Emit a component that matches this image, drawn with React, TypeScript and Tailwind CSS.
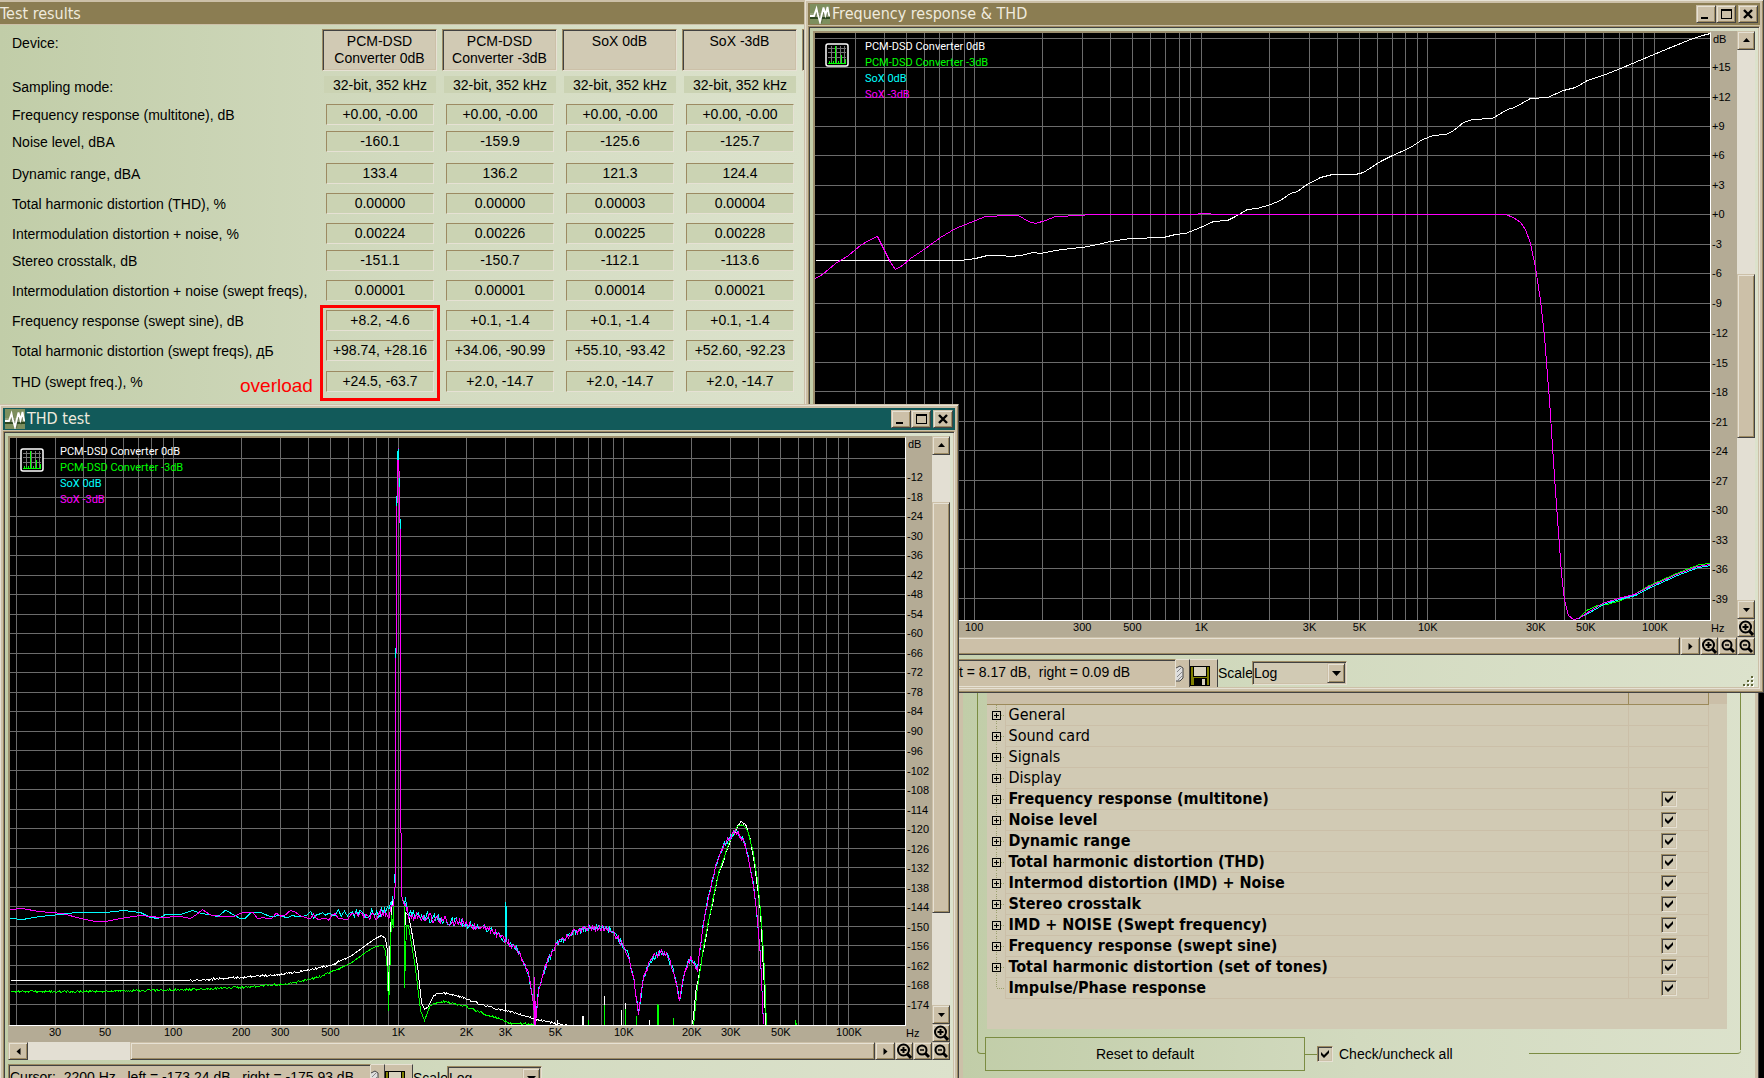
import { useId, useState } from "react";
import type { ReactNode } from "react";

const RAISED =
  "border border-t-[#ccc0a8] border-l-[#ccc0a8] border-r-[#424242] border-b-[#424242] bg-[#ccc0a8] shadow-[inset_1px_1px_0_#e6e1d4,inset_-1px_-1px_0_#9c8a62]";
const SUNKEN =
  "border border-t-[#9c8a62] border-l-[#9c8a62] border-r-[#e6e1d4] border-b-[#e6e1d4] shadow-[inset_1px_1px_0_#424242,inset_-1px_-1px_0_#ccc0a8]";
const FACE_GRADIENT = "bg-linear-to-r from-[#c1cda8] via-[#d2dabf] to-[#dce2cc]";
const UI_FONT = "font-['DejaVu_Sans_Condensed','Noto_Sans',sans-serif]";

type Point = [number, number];

interface Trace {
  color: string;
  points: Point[];
}

interface ChartSpec {
  // plot area origin and size, in the units of the trace points
  x0: number;
  y0: number;
  decadeX: number;
  decade: number;
  minFreq: number;
  gridTop: number;
  gridStep: number;
  gridCount: number;
  yLabels: string[];
  yUnitAt: number;
  xLabels: [number, string][];
  traces: Trace[];
}

const W = 895;
const H = 587;

function hash(n: number) {
  const s = Math.sin(n * 127.1) * 43758.5453;
  return s - Math.floor(s);
}

function noisy(points: Point[], amp: (x: number) => number, seed: number, stepAt: (x: number) => number = () => 1): Point[] {
  const out: Point[] = [];
  for (let i = 0; i < points.length - 1; i++) {
    const [ax, ay] = points[i];
    const [bx, by] = points[i + 1];
    const steps = Math.max(1, Math.round((bx - ax) / stepAt(ax)));
    for (let s = 0; s < steps; s++) {
      const x = ax + ((bx - ax) * s) / steps;
      const y = ay + ((by - ay) * s) / steps;
      out.push([x, y + (hash(x + seed) - 0.5) * 2 * amp(x)]);
    }
  }
  out.push(points[points.length - 1]);
  return out;
}

/* ---------- frequency response data ---------- */

const FR_OVERLOAD: Point[] = [
  [815, 260], [960, 260], [975, 258], [987, 255], [1000, 255], [1010, 256], [1020, 255], [1033, 252],
  [1040, 253], [1055, 250], [1070, 248], [1082, 247], [1097, 244], [1110, 241], [1130, 238], [1163, 237],
  [1175, 234], [1185, 233], [1200, 227], [1213, 221], [1227, 220], [1235, 216], [1247, 209], [1257, 208],
  [1270, 204], [1280, 200], [1290, 193], [1297, 191], [1305, 185], [1320, 177], [1332, 174], [1355, 174],
  [1363, 172], [1380, 161], [1390, 156], [1410, 147], [1422, 139], [1433, 135], [1445, 134], [1452, 131],
  [1463, 122], [1472, 119], [1492, 118], [1507, 109], [1514, 107], [1530, 98], [1547, 97], [1563, 90],
  [1575, 87], [1587, 80], [1605, 74], [1620, 68], [1663, 50], [1690, 39], [1702, 35], [1710, 33],
];

const FR_COMMON: Point[] = [
  [815, 278], [822, 274], [835, 263], [848, 255], [860, 245], [870, 239], [877, 236], [885, 252], [890, 262],
  [895, 269], [902, 265], [910, 258], [925, 248], [940, 237], [955, 228], [975, 220], [985, 216], [1008, 215],
  [1018, 215], [1028, 221], [1035, 223], [1045, 220], [1055, 216], [1080, 215], [1090, 214], [1190, 214],
  [1205, 213], [1215, 214], [1505, 214], [1513, 217], [1520, 222], [1525, 229], [1530, 243], [1535, 267],
  [1540, 300], [1544, 336], [1547, 375], [1549, 400], [1553, 461], [1556, 505], [1559, 545], [1561, 573],
  [1564, 600], [1568, 615], [1573, 619], [1578, 618],
];

const FR_TAIL: Point[] = [
  [1592, 609], [1602, 603], [1618, 598], [1634, 594], [1647, 587], [1676, 574], [1697, 566], [1710, 564],
];

const FR_TAIL_GREEN: Point[] = [
  [1586, 610], [1597, 605], [1607, 604], [1620, 600], [1634, 594], [1647, 586], [1676, 573], [1699, 564], [1710, 563],
];

/* ---------- THD data ---------- */

const THD_LOBES: Point[] = [
  [480, 927], [492, 930], [505, 940], [517, 950], [528, 973], [533, 1003], [535, 1024], [538, 990], [547, 960],
  [557, 943], [573, 932], [590, 927], [607, 928], [617, 937], [627, 953], [633, 977], [638, 1014], [643, 977],
  [650, 960], [660, 951], [667, 956], [673, 970], [679, 999], [685, 968], [690, 959], [697, 968], [703, 923],
  [710, 887], [717, 860], [725, 842], [735, 831], [742, 838], [747, 853], [752, 877], [756, 910], [760, 957],
  [763, 1024],
];

const THD_SPIKE: Point[] = [
  [393, 905], [395, 880], [395, 655], [396, 650], [396, 505], [397, 500], [397, 460], [398, 448], [398, 460],
  [399, 480], [399, 520], [400, 525], [400, 830], [401, 835], [401, 895], [404, 905],
];

const noiseAmp = (x: number) => {
  if (x < 195) return 0;
  if (x < 310) return 3;
  if (x < 475) return 5;
  return 3;
};

const noiseStep = (x: number) => {
  if (x < 240) return 8;
  if (x < 310) return 5;
  if (x < 350) return 3;
  return x < 375 ? 2 : 1;
};

const THD_SOX0: Point[] = [
  ...noisy(
    [[10, 918], [22, 919], [40, 916], [60, 914], [75, 912], [105, 912], [123, 910], [140, 912], [150, 917],
      [158, 918], [165, 914], [180, 914], [192, 910], [210, 915], [225, 912], [240, 916], [260, 911], [275, 916],
      [292, 917], [310, 913], [350, 914], [375, 912], [389, 910], [392, 896]],
    noiseAmp,
    3,
    noiseStep,
  ),
  ...THD_SPIKE,
  ...noisy([[405, 900], [408, 912], [430, 917], [450, 920], [465, 924], ...THD_LOBES], noiseAmp, 3),
];

const THD_SOX3: Point[] = [
  ...noisy(
    [[10, 909], [22, 908], [38, 911], [62, 913], [80, 918], [95, 921], [105, 921], [120, 918], [140, 915],
      [160, 917], [180, 916], [190, 918], [202, 912], [220, 915], [248, 912], [262, 917], [285, 912], [310, 915],
      [350, 915], [375, 914], [389, 914], [392, 905]],
    noiseAmp,
    57,
    noiseStep,
  ),
  ...THD_SPIKE,
  ...noisy([[405, 905], [408, 915], [430, 918], [450, 921], [465, 925], ...THD_LOBES], noiseAmp, 57),
];

const THD_WHITE: Point[] = [
  ...noisy(
    [[10, 980], [190, 980], [240, 977], [280, 974], [300, 971], [330, 965], [350, 956], [365, 945], [375, 938],
      [381, 935], [385, 938]],
    (x) => (x < 190 || x > 345 ? 0 : 1),
    9,
  ),
  [387, 950], [388, 992], [390, 930], [392, 898], ...THD_SPIKE, [404, 938], [405, 912], [408, 915],
  ...noisy(
    [[411, 930], [417, 965], [421, 1002], [424, 1009], [428, 1006], [433, 995], [440, 992], [460, 996], [480, 1004],
      [500, 1009], [520, 1014], [535, 1019], [555, 1023], [570, 1026]],
    (x) => (x < 433 ? 0 : 1),
    11,
  ),
];

const THD_GREEN: Point[] = [
  ...noisy(
    [[10, 991], [100, 991], [190, 989], [240, 987], [290, 983], [320, 976], [350, 963], [365, 952], [375, 946],
      [382, 945], [385, 950]],
    (x) => (x > 340 ? 0 : 1),
    5,
  ),
  [387, 970], [388, 1010], [390, 950], [391, 915], [393, 927], ...THD_SPIKE, [404, 987], [406, 925],
  ...noisy(
    [[408, 925], [415, 968], [420, 1010], [424, 1020], [430, 1004], [445, 1001], [465, 1006], [480, 1012],
      [500, 1019], [510, 1023], [535, 1024], [540, 1027]],
    (x) => (x < 430 ? 0 : 1),
    21,
  ),
];

const ULTRA_WHITE = noisy(
  [[692, 1025], [696, 987], [703, 949], [710, 912], [718, 874], [727, 848], [733, 833], [740, 822], [745, 824],
    [750, 840], [755, 870], [760, 912], [764, 990], [765, 1025]],
  () => 2,
  31,
);

const ULTRA_GREEN = noisy(
  [[693, 1025], [697, 987], [703, 947], [710, 910], [718, 873], [727, 847], [733, 832], [738, 825], [744, 825],
    [748, 833], [753, 853], [757, 880], [761, 920], [764, 970], [766, 1025]],
  () => 1,
  43,
);

function tick(color: string, x: number, top: number, bottom = 1025): Trace {
  return { color, points: [[x, top], [x, bottom]] };
}

const WHITE = "#ffffff";
const GREEN = "#00ff00";
const CYAN = "#00ffff";
const MAGENTA = "#ff00ff";

const FREQ_CHART: ChartSpec = {
  x0: 815,
  y0: 33,
  decadeX: 1201,
  decade: 226.6,
  minFreq: 30,
  gridTop: 37.6,
  gridStep: 29.47,
  gridCount: 20,
  yLabels: ["", "+15", "+12", "+9", "+6", "+3", "+0", "-3", "-6", "-9", "-12", "-15", "-18", "-21", "-24", "-27", "-30", "-33", "-36", "-39"],
  yUnitAt: 39,
  xLabels: [[100, "100"], [300, "300"], [500, "500"], [1000, "1K"], [3000, "3K"], [5000, "5K"], [10000, "10K"], [30000, "30K"], [50000, "50K"], [100000, "100K"]],
  traces: [
    { color: WHITE, points: FR_OVERLOAD },
    { color: GREEN, points: [...FR_COMMON, ...FR_TAIL_GREEN] },
    { color: CYAN, points: [[1578, 618], ...FR_TAIL.map(([x, y]): Point => [x + 1, y + 1])] },
    { color: MAGENTA, points: [...FR_COMMON, ...FR_TAIL] },
  ],
};

const THD_CHART: ChartSpec = {
  x0: 10,
  y0: 438,
  decadeX: 398.5,
  decade: 225,
  minFreq: 20,
  gridTop: 457.9,
  gridStep: 19.5,
  gridCount: 29,
  yLabels: ["", ...Array.from({ length: 28 }, (_, i) => String(-12 - i * 6))],
  yUnitAt: 444,
  xLabels: [[30, "30"], [50, "50"], [100, "100"], [200, "200"], [300, "300"], [500, "500"], [1000, "1K"], [2000, "2K"], [3000, "3K"], [5000, "5K"], [10000, "10K"], [20000, "20K"], [30000, "30K"], [50000, "50K"], [100000, "100K"]],
  traces: [
    { color: WHITE, points: THD_WHITE },
    { color: WHITE, points: ULTRA_WHITE },
    tick(WHITE, 505, 1002, 1011),
    tick(WHITE, 557, 1019),
    tick(WHITE, 582, 1015),
    tick(WHITE, 583, 1015),
    tick(WHITE, 604, 995),
    tick(WHITE, 621, 1009),
    tick(WHITE, 625, 1002),
    tick(WHITE, 649, 1019),
    { color: GREEN, points: THD_GREEN },
    { color: GREEN, points: ULTRA_GREEN },
    tick(GREEN, 604, 1004),
    tick(GREEN, 588, 1019),
    tick(GREEN, 625, 1008),
    tick(GREEN, 636, 1015),
    tick(GREEN, 657, 1003),
    tick(GREEN, 658, 1004),
    tick(GREEN, 673, 1017),
    tick(GREEN, 795, 1019),
    tick(GREEN, 796, 1022),
    { color: CYAN, points: THD_SOX0 },
    tick(CYAN, 505, 901, 940),
    tick(CYAN, 506, 905, 940),
    { color: MAGENTA, points: THD_SOX3 },
    tick(MAGENTA, 534, 976),
    tick(MAGENTA, 535, 1000),
    tick(CYAN, 398, 448, 459),
    tick(CYAN, 397, 450, 459),
    tick(CYAN, 396, 495, 505),
    tick(CYAN, 399, 477, 486),
    tick(CYAN, 400, 518, 528),
    tick(CYAN, 395, 647, 657),
    tick(CYAN, 394, 873, 882),
  ],
};

const LEGEND = [
  { name: "PCM-DSD Converter 0dB", className: "text-white" },
  { name: "PCM-DSD Converter -3dB", className: "text-[#00ff00]" },
  { name: "SoX 0dB", className: "text-[#00ffff]" },
  { name: "SoX -3dB", className: "text-[#ff00ff]" },
];

function freqToX(spec: ChartSpec, freq: number) {
  return Math.round(spec.decadeX + spec.decade * Math.log10(freq / 1000) - 0.5) - spec.x0;
}

function gridFreqs(spec: ChartSpec) {
  const out: number[] = [];
  for (const base of [10, 100, 1000, 10000, 100000]) {
    for (let n = 1; n < 10; n++) {
      const f = base * n;
      if (f >= spec.minFreq && f <= 100000) out.push(f);
    }
  }
  return out;
}

function gridY(spec: ChartSpec, i: number) {
  return Math.round(spec.gridTop + spec.gridStep * i) - spec.y0;
}

/* ---------- icons ---------- */

function AppIcon() {
  return (
    <svg className="size-5 shrink-0" viewBox="0 0 20 20" aria-hidden="true">
      <rect width="20" height="20" fill="#7d8f5e" />
      <rect y="9" width="20" height="4" fill="#93a078" />
      <rect y="13" width="20" height="2" fill="#2f4a1f" />
      <path d="M1 13h4l2.500-6 2 6 1.500 6 3-13 2 7 2-8 2 8" fill="none" stroke="#35432a" strokeWidth="2" opacity=".4" />
      <path d="M0 12h4L6.500 4.500 8 11l2 7 3.500-14.500L15.500 11l2-8L19 11l1 1" fill="none" stroke="#fff" strokeWidth="1.800" />
    </svg>
  );
}

function SpectrumIcon() {
  return (
    <svg className="size-6" viewBox="0 0 24 24" shapeRendering="crispEdges" aria-hidden="true">
      <rect x="1" y="1" width="22" height="22" rx="2" fill="#000" stroke="#fff" strokeWidth="1.500" shapeRendering="auto" />
      <path d="M3 5.500h18M3 9.500h18M3 14.500h18M6.500 3v18M11.500 3v18M15.500 3v18M19.500 3v18" stroke="#777" />
      <path d="M3 20.500h18M4.500 18v3M6.500 19v2M10.500 3v18M13.500 18v3M16.500 12v9M20.500 16v5M8.500 18v3" stroke="#00ff00" />
    </svg>
  );
}

function ZoomIcon({ plus }: { plus?: boolean }) {
  return (
    <svg className="size-4" viewBox="0 0 16 16" fill="none" stroke="#000" aria-hidden="true">
      {plus ? (
        <>
          <circle cx="7.500" cy="7" r="5.500" strokeWidth="2" />
          <path d="M4.500 7h6M7.500 4v6" strokeWidth="2" />
          <path d="M11 10.500l4 4.500" strokeWidth="3" />
        </>
      ) : (
        <>
          <circle cx="7" cy="7" r="4.500" strokeWidth="2" />
          <path d="M5 7h4" strokeWidth="1.500" />
          <path d="M10 10l4 4" strokeWidth="3" />
        </>
      )}
    </svg>
  );
}

function Arrow({ dir }: { dir: "up" | "down" | "left" | "right" }) {
  const d = {
    up: "M1 6h7L4.500 2z",
    down: "M1 3h7L4.500 7z",
    left: "M6.500 1v7L2.500 4.500z",
    right: "M2.500 1v7l4-3.500z",
  }[dir];
  return (
    <svg className="size-[9px]" viewBox="0 0 9 9" aria-hidden="true">
      <path d={d} fill="#000" />
    </svg>
  );
}

function FloppyIcon() {
  return (
    <svg className="h-5 w-5" viewBox="0 0 20 20" shapeRendering="crispEdges" aria-hidden="true">
      <rect width="20" height="20" fill="#000" />
      <rect x="1" y="1" width="18" height="18" fill="#808000" />
      <rect x="3" y="0" width="14" height="11" fill="#000" />
      <rect x="4" y="1" width="12" height="9" fill="#d8d2be" />
      <rect x="4" y="12" width="13" height="8" fill="#000" />
      <rect x="12" y="13" width="3" height="6" fill="#d8d2be" />
    </svg>
  );
}

/* ---------- shared controls ---------- */

function ToolButton({ label, className, children }: { label: string; className: string; children?: ReactNode }) {
  return (
    <button type="button" aria-label={label} className={`flex shrink-0 items-center justify-center ${RAISED} ${className}`}>
      {children}
    </button>
  );
}

function CheckBox({ id, label, checked, onChange }: { id?: string; label?: string; checked: boolean; onChange: (v: boolean) => void }) {
  return (
    <span className="relative block size-4">
      <input
        id={id}
        type="checkbox"
        aria-label={label}
        checked={checked}
        onChange={(e) => onChange(e.target.checked)}
        className={`peer block size-4 appearance-none bg-[#d1cab4] ${SUNKEN}`}
      />
      <svg className="pointer-events-none absolute inset-0 hidden size-4 peer-checked:block" viewBox="0 0 16 16" aria-hidden="true">
        <path d="M4 6v3l3 3 5-5V4L7 9z" fill="#000" />
      </svg>
    </span>
  );
}

function TitleBar({ title, active }: { title: string; active?: boolean }) {
  return (
    <div className={`flex h-[22px] items-center gap-[2px] px-[2px] text-white ${active ? "bg-[#125a5a]" : "bg-[#8b7d52]"}`}>
      <AppIcon />
      <h2 className={`flex-1 text-base leading-5 text-[#efeadd] ${UI_FONT}`}>{title}</h2>
      <div className="flex">
        <ToolButton label="Minimize" className="h-[18px] w-5">
          <svg className="size-3" viewBox="0 0 12 12" aria-hidden="true"><path d="M1 9h7v2H1z" /></svg>
        </ToolButton>
        <ToolButton label="Maximize" className="mr-[2px] h-[18px] w-5">
          <svg className="size-3" viewBox="0 0 12 12" shapeRendering="crispEdges" aria-hidden="true">
            <path d="M1 1h11v10H1zM2 3v7h9V3z" fillRule="evenodd" />
          </svg>
        </ToolButton>
        <ToolButton label="Close" className="h-[18px] w-5">
          <svg className="size-3" viewBox="0 0 12 12" aria-hidden="true">
            <path d="M2 2l8 8M10 2l-8 8" stroke="#000" strokeWidth="2.400" />
          </svg>
        </ToolButton>
      </div>
    </div>
  );
}

/* ---------- chart window ---------- */

function Plot({ spec }: { spec: ChartSpec }) {
  return (
    <div className="relative min-h-0 flex-1 border-t-2 border-r border-b border-l-2 border-t-[#9c8f6e] border-r-white border-b-white border-l-[#9c8f6e] bg-black">
      <svg className="absolute inset-0 size-full" viewBox={`0 0 ${W} ${H}`} preserveAspectRatio="none" shapeRendering="crispEdges" role="img" aria-label="Spectrum">
        {gridFreqs(spec).map((f) => (
          <rect key={f} x={freqToX(spec, f)} y="0" width="1" height={H} fill="#6b6b6b" />
        ))}
        {Array.from({ length: spec.gridCount }, (_, i) => (
          <rect key={i} x="0" y={gridY(spec, i)} width={W} height="1" fill="#6b6b6b" />
        ))}
        {spec.traces.map((t, i) => (
          <polyline
            key={i}
            points={t.points.map(([x, y]) => `${x - spec.x0 + 0.5},${y - spec.y0 + 0.5}`).join(" ")}
            fill="none"
            stroke={t.color}
          />
        ))}
      </svg>
      <div className="absolute top-[6px] left-[10px] flex gap-4">
        <div className="pt-1"><SpectrumIcon /></div>
        <ul className="font-[Roboto,'Liberation_Sans',sans-serif] text-[11px] leading-4">
          {LEGEND.map((item) => (
            <li key={item.name} className={item.className}>{item.name}</li>
          ))}
        </ul>
      </div>
    </div>
  );
}

function YAxis({ spec }: { spec: ChartSpec }) {
  return (
    <div className="flex w-[26px] flex-col bg-[#b4ab95] pt-[2px] text-[11px]">
      <svg className="w-full flex-1 overflow-visible">
        <text x="2" y={`${((spec.yUnitAt - spec.y0) / H) * 100}%`} dy="4">dB</text>
        {spec.yLabels.map((label, i) =>
          label ? (
            <text key={label} x="1" y={`${(gridY(spec, i) / H) * 100}%`} dy="4">{label}</text>
          ) : null,
        )}
      </svg>
      <span className="h-4 leading-[14px]">Hz</span>
    </div>
  );
}

function XAxis({ spec }: { spec: ChartSpec }) {
  return (
    <svg className="h-4 w-full bg-[#b4ab95] pl-[2px] text-[11px]">
      {spec.xLabels.map(([f, label]) => (
        <text key={label} x={`${(freqToX(spec, f) / W) * 100}%`} y="10" textAnchor="middle">{label}</text>
      ))}
    </svg>
  );
}

interface ScrollLayout {
  vBefore: number;
  vThumb: number;
  vAfter: number;
  hBefore: number;
  hThumb: number;
}

function ChartWindow({ title, active, spec, scroll, status, className }: {
  title: string;
  active?: boolean;
  spec: ChartSpec;
  scroll: ScrollLayout;
  status: string;
  className: string;
}) {
  const scaleId = useId();
  return (
    <section className={`absolute flex h-[694px] flex-col p-[3px] ${RAISED} ${className}`}>
      <TitleBar title={title} active={active} />
      <div className={`mt-px flex min-h-0 flex-1 flex-col px-1 pt-1 ${SUNKEN} ${FACE_GRADIENT}`}>
        <div className="flex min-h-0 flex-1">
          <div className="flex min-w-0 flex-1 flex-col">
            <Plot spec={spec} />
            <XAxis spec={spec} />
          </div>
          <YAxis spec={spec} />
          <div className="flex w-[18px] flex-col bg-[#e3dfd3]">
            <ToolButton label="Scroll up" className="h-[19px]"><Arrow dir="up" /></ToolButton>
            <div className="flex min-h-0 flex-1 flex-col">
              <div style={{ flexGrow: scroll.vBefore }} />
              <div className={RAISED} style={{ flexGrow: scroll.vThumb }} />
              <div style={{ flexGrow: scroll.vAfter }} />
            </div>
            <ToolButton label="Scroll down" className="h-[19px]"><Arrow dir="down" /></ToolButton>
            <ToolButton label="Zoom in vertically" className="h-[18px]"><ZoomIcon plus /></ToolButton>
          </div>
        </div>
        <div className="flex h-[18px] bg-[#e3dfd3]">
          <ToolButton label="Scroll left" className="w-5"><Arrow dir="left" /></ToolButton>
          <div className="flex min-w-0 flex-1">
            <div style={{ flexGrow: scroll.hBefore }} />
            <div className={RAISED} style={{ flexGrow: scroll.hThumb }} />
          </div>
          <ToolButton label="Scroll right" className="w-5"><Arrow dir="right" /></ToolButton>
          <ToolButton label="Zoom in horizontally" className="w-[18px]"><ZoomIcon plus /></ToolButton>
          <ToolButton label="Zoom out horizontally" className="w-[19px]"><ZoomIcon /></ToolButton>
          <ToolButton label="Zoom out vertically" className="w-[18px]"><ZoomIcon /></ToolButton>
        </div>
        <div className="flex h-[33px] items-start pt-1 text-sm">
          <p className={`h-7 w-[363px] overflow-hidden bg-[#ccc0a8] px-px leading-6 whitespace-pre ${SUNKEN}`}>{status}</p>
          <button type="button" aria-label="Copy" className="flex h-7 w-[13px] items-center border-t border-[#e6e1d4] bg-[#ccc0a8]">
            <svg className="h-5 w-2" viewBox="0 0 8 20" aria-hidden="true">
              <path d="M0 4l4-2 3 2v10l-3 3H0" fill="#dedede" stroke="#444" />
              <path d="M1 8l4-4M1 13l5-5M2 16l4-4" stroke="#888" />
            </svg>
          </button>
          <button type="button" aria-label="Save" className="flex h-7 w-[29px] items-center border-t border-r border-l border-t-[#e6e1d4] border-r-[#424242] border-l-[#424242] bg-[#ccc0a8] pt-1">
            <FloppyIcon />
          </button>
          <label htmlFor={scaleId} className="w-[34px] leading-7">Scale</label>
          <span className="relative mt-[2px] block w-[95px]">
            <select id={scaleId} defaultValue="Log" className={`block h-[24px] w-full appearance-none bg-[#d1cab4] pl-px ${SUNKEN}`}>
              <option>Log</option>
              <option>Linear</option>
            </select>
            <span className={`pointer-events-none absolute inset-y-[2px] right-[2px] flex w-[18px] items-center justify-center ${RAISED}`}>
              <svg className="h-[5px] w-[9px]" viewBox="0 0 9 5" aria-hidden="true"><path d="M0 0h9L4.500 5z" /></svg>
            </span>
          </span>
          <svg className="ml-auto size-3 self-end" viewBox="0 0 12 12" shapeRendering="crispEdges" aria-hidden="true">
            <path d="M9 1h2v2H9zM5 5h2v2H5zM9 5h2v2H9zM1 9h2v2H1zM5 9h2v2H5zM9 9h2v2H9z" fill="#fff" />
            <path d="M8 0h2v2H8zM4 4h2v2H4zM8 4h2v2H8zM0 8h2v2H0zM4 8h2v2H4zM8 8h2v2H8z" fill="#5f6638" />
          </svg>
        </div>
      </div>
    </section>
  );
}

/* ---------- test results window ---------- */

const DEVICES = ["PCM-DSD Converter 0dB", "PCM-DSD Converter -3dB", "SoX 0dB", "SoX -3dB"];

const RESULTS = [
  { label: "Frequency response (multitone), dB", height: "h-[27px]", values: ["+0.00, -0.00", "+0.00, -0.00", "+0.00, -0.00", "+0.00, -0.00"] },
  { label: "Noise level, dBA", height: "h-[32px]", values: ["-160.1", "-159.9", "-125.6", "-125.7"] },
  { label: "Dynamic range, dBA", height: "h-[30px]", values: ["133.4", "136.2", "121.3", "124.4"] },
  { label: "Total harmonic distortion (THD), %", height: "h-[30px]", values: ["0.00000", "0.00000", "0.00003", "0.00004"] },
  { label: "Intermodulation distortion + noise, %", height: "h-[27px]", values: ["0.00224", "0.00226", "0.00225", "0.00228"] },
  { label: "Stereo crosstalk, dB", height: "h-[30px]", values: ["-151.1", "-150.7", "-112.1", "-113.6"] },
  { label: "Intermodulation distortion + noise (swept freqs),", height: "h-[30px]", values: ["0.00001", "0.00001", "0.00014", "0.00021"] },
  { label: "Frequency response (swept sine), dB", height: "h-[30px]", values: ["+8.2, -4.6", "+0.1, -1.4", "+0.1, -1.4", "+0.1, -1.4"] },
  { label: "Total harmonic distortion (swept freqs), дБ", height: "h-[31px]", values: ["+98.74, +28.16", "+34.06, -90.99", "+55.10, -93.42", "+52.60, -92.23"] },
  { label: "THD (swept freq.), %", height: "h-[33px]", values: ["+24.5, -63.7", "+2.0, -14.7", "+2.0, -14.7", "+2.0, -14.7"] },
];

function TestResults() {
  return (
    <section className={`absolute -top-[2px] -left-1 h-[412px] w-[812px] p-[3px] ${RAISED}`}>
      <h2 className={`h-[22px] bg-[#8b7d52] text-base leading-[23px] text-[#efeadd] ${UI_FONT}`}>Test results</h2>
      <div className={`relative h-[382px] overflow-hidden border-t border-[#ccc0a8] ${FACE_GRADIENT}`}>
        <table className="w-[922px] table-fixed border-collapse text-left text-sm">
          <colgroup>
            <col className="w-[322px]" />
            <col className="w-[120px]" />
            <col className="w-[120px]" />
            <col className="w-[120px]" />
            <col className="w-[120px]" />
            <col className="w-[120px]" />
          </colgroup>
          <thead>
            <tr className="h-[51px] align-top">
              <th className="pt-2 pl-3 text-left font-normal leading-5">Device:</th>
              {DEVICES.map((name) => (
                <th key={name} className="pt-1 font-normal">
                  <div className={`h-[42px] w-[115px] bg-[#d1cab4] px-2 pt-[3px] text-center leading-[17px] ${SUNKEN}`}>{name}</div>
                </th>
              ))}
              <td className="pt-1">
                <div className={`h-[42px] w-[115px] bg-[#d1cab4] ${SUNKEN}`} />
              </td>
            </tr>
          </thead>
          <tbody>
            <tr className="h-[28px] align-top">
              <th className="pt-px pl-3 font-normal leading-5">Sampling mode:</th>
              {DEVICES.map((name) => (
                <td key={name} className="pl-[2px]">
                  <div className="h-[17px] w-28 bg-[#cbd3b3] text-center leading-[18px] whitespace-nowrap">32-bit, 352 kHz</div>
                </td>
              ))}
              <td />
            </tr>
            {RESULTS.map((row) => (
              <tr key={row.label} className={`align-top ${row.height}`}>
                <th className="pt-px pl-3 font-normal leading-5 whitespace-nowrap">{row.label}</th>
                {row.values.map((value, i) => (
                  <td key={i} className="pl-1">
                    <div className="h-[21px] w-[108px] border border-t-[#9c8a62] border-r-[#e6e1d4] border-b-[#e6e1d4] border-l-[#9c8a62] bg-[#cbd3b3] text-center leading-[19px] whitespace-nowrap">
                      {value}
                    </div>
                  </td>
                ))}
                <td />
              </tr>
            ))}
          </tbody>
        </table>
        <div className="absolute top-[280px] left-[320px] h-[96px] w-[120px] border-3 border-[#ff0000]" />
        <span className="absolute top-[349px] left-[240px] text-[19px] leading-6 text-[#ff0000]">overload</span>
      </div>
    </section>
  );
}

/* ---------- settings window ---------- */

const TESTS = [
  { name: "General" },
  { name: "Sound card" },
  { name: "Signals" },
  { name: "Display" },
  { name: "Frequency response (multitone)", test: true },
  { name: "Noise level", test: true },
  { name: "Dynamic range", test: true },
  { name: "Total harmonic distortion (THD)", test: true },
  { name: "Intermod distortion (IMD) + Noise", test: true },
  { name: "Stereo crosstalk", test: true },
  { name: "IMD + NOISE (Swept frequency)", test: true },
  { name: "Frequency response (swept sine)", test: true },
  { name: "Total harmonic distortion (set of tones)", test: true },
  { name: "Impulse/Phase response", test: true, leaf: true },
];

function Branch({ leaf }: { leaf?: boolean }) {
  return (
    <svg className="block h-5 w-[18px]" viewBox="0 0 18 20" shapeRendering="crispEdges" aria-hidden="true">
      <path d={leaf ? "M9.500 0v10" : "M9.500 0v20"} stroke="#9aa06c" strokeDasharray="1 1" />
      <path d="M10 10.500h8" stroke="#9aa06c" strokeDasharray="1 1" />
      {!leaf && (
        <>
          <rect x="5.500" y="6.500" width="8" height="8" fill="#d1cab4" stroke="#000" />
          <path d="M7 10.500h5M9.500 8v5" stroke="#000" />
        </>
      )}
    </svg>
  );
}

function SettingsWindow() {
  const allId = useId();
  const [enabled, setEnabled] = useState<Record<string, boolean>>({});
  const isOn = (name: string) => enabled[name] ?? true;
  const tests = TESTS.filter((t) => t.test);
  const setAll = (v: boolean) => setEnabled(Object.fromEntries(tests.map((t) => [t.name, v])));

  return (
    <section className="absolute top-[680px] right-[5px] bottom-0 left-[957px] border-r border-l-2 border-r-[#424242] border-l-[#e6e1d4] bg-[#ccc0a8] pr-[3px] pl-1">
      <div className={`h-full px-[14px] ${FACE_GRADIENT}`}>
        <div className="h-[356px] border-x border-[#7b8c42] pr-[13px] pl-[9px]">
          <div className="h-[349px] bg-[#d1cab4]">
            <table className="w-full table-fixed border-collapse">
              <colgroup>
                <col className="w-[18px]" />
                <col />
                <col className="w-20" />
                <col className="w-[19px]" />
              </colgroup>
              <thead>
                <tr className="h-6 bg-[#cbbfa8]">
                  <td className="border-b border-[#9c8a5a]" />
                  <td className="border-r border-b border-[#9c8a5a]" />
                  <td className="border-r border-b border-[#9c8a5a]" />
                  <td />
                </tr>
              </thead>
              <tbody>
                {TESTS.map((t) => (
                  <tr key={t.name} className="h-[21px]">
                    <td className="border-r border-[#cbbfa8] p-0">
                      {t.leaf ? (
                        <Branch leaf />
                      ) : (
                        <button type="button" aria-label={`Expand ${t.name}`} className="block"><Branch /></button>
                      )}
                    </td>
                    <td className={`border-r border-b border-[#cbbfa8] p-0 pl-[3px] text-base leading-5 whitespace-nowrap ${t.test ? "font-bold" : ""} ${UI_FONT}`}>
                      {t.name}
                    </td>
                    <td className="border-r border-b border-[#cbbfa8] p-0 pl-8">
                      {t.test && (
                        <CheckBox label={t.name} checked={isOn(t.name)} onChange={(v) => setEnabled({ ...enabled, [t.name]: v })} />
                      )}
                    </td>
                    <td />
                  </tr>
                ))}
              </tbody>
            </table>
          </div>
        </div>
        <div className="flex h-[36px] items-center text-sm">
          <div className="h-[18px] w-2 self-start rounded-bl-[4px] border-b border-l border-[#7b8c42]" />
          <button type="button" className="h-[34px] w-[320px] border border-[#7b8c42]">Reset to default</button>
          <div className="h-px w-3 bg-[#7b8c42]" />
          <CheckBox id={allId} checked={tests.every((t) => isOn(t.name))} onChange={setAll} />
          <label htmlFor={allId} className="w-[196px] pl-[6px]">Check/uncheck all</label>
          <div className="h-[18px] flex-1 self-start rounded-br-[4px] border-b border-[#7b8c42]" />
          <div className="-ml-1 h-[14px] w-1 self-start border-r border-[#7b8c42]" />
        </div>
      </div>
    </section>
  );
}

export default function App() {
  return (
    <main className="relative h-screen w-full overflow-hidden bg-black font-['Liberation_Sans',Arial,sans-serif] text-black">
      <TestResults />
      <SettingsWindow />
      <ChartWindow
        title="Frequency response & THD"
        spec={FREQ_CHART}
        scroll={{ vBefore: 225, vThumb: 162, vAfter: 163, hBefore: 0, hThumb: 1 }}
        status="Cursor:  10 000 Hz,  left = 8.17 dB,  right = 0.09 dB"
        className="-top-px right-0 left-[804px]"
      />
      <ChartWindow
        title="THD test"
        active
        spec={THD_CHART}
        scroll={{ vBefore: 47, vThumb: 411, vAfter: 92, hBefore: 102, hThumb: 745 }}
        status="Cursor:  2200 Hz,  left = -173.24 dB,  right = -175.93 dB"
        className="top-[404px] -left-px w-[960px]"
      />
    </main>
  );
}
